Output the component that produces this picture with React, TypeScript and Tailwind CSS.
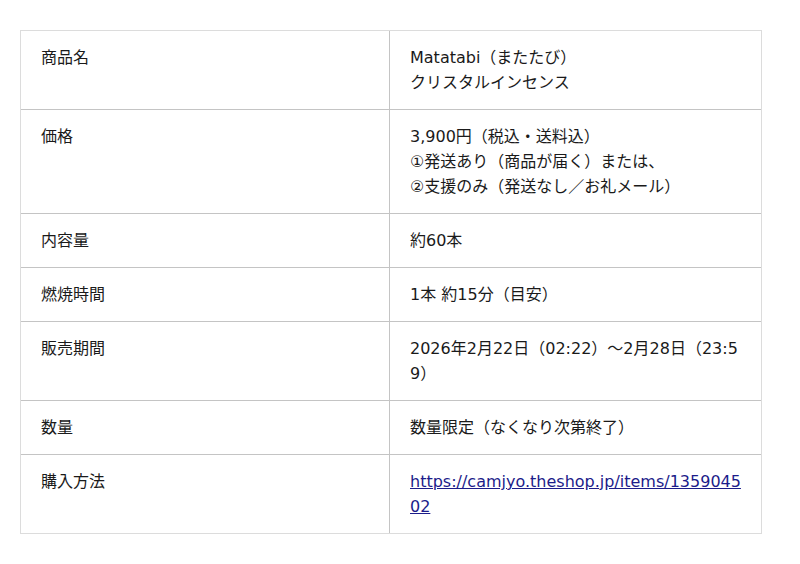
import React from "react";

const rows: { label: string; value: React.ReactNode }[] = [
  {
    label: "商品名",
    value: (
      <>
        Matatabi（またたび）
        <br />
        クリスタルインセンス
      </>
    ),
  },
  {
    label: "価格",
    value: (
      <>
        3,900円（税込・送料込）
        <br />
        ①発送あり（商品が届く）または、
        <br />
        ②支援のみ（発送なし／お礼メール）
      </>
    ),
  },
  { label: "内容量", value: "約60本" },
  { label: "燃焼時間", value: "1本 約15分（目安）" },
  { label: "販売期間", value: "2026年2月22日（02:22）～2月28日（23:59）" },
  { label: "数量", value: "数量限定（なくなり次第終了）" },
  {
    label: "購入方法",
    value: (
      <a href="#" className="text-[#1c1c8a] underline">
        https://camjyo.theshop.jp/items/135904502
      </a>
    ),
  },
];

export default function App() {
  return (
    <div
      className="bg-white min-h-[564px] pt-[30px] pl-[20px] text-[16px] leading-[25px] text-[#1a1a1a]"
      style={{ fontFamily: '"DejaVu Sans", "Noto Sans CJK JP", sans-serif' }}
    >
      <div className="w-[742px] border border-[#dcdcdc]">
        {rows.map((r, i) => (
          <div
            key={r.label}
            className={
              "flex " + (i === 0 ? "" : "border-t border-[#c4c4c4]")
            }
          >
            <div className="w-[368px] shrink-0 px-[20px] py-[14px]">{r.label}</div>
            <div className="flex-1 border-l border-[#c4c4c4] px-[20px] py-[14px] break-all">
              {r.value}
            </div>
          </div>
        ))}
      </div>
    </div>
  );
}
